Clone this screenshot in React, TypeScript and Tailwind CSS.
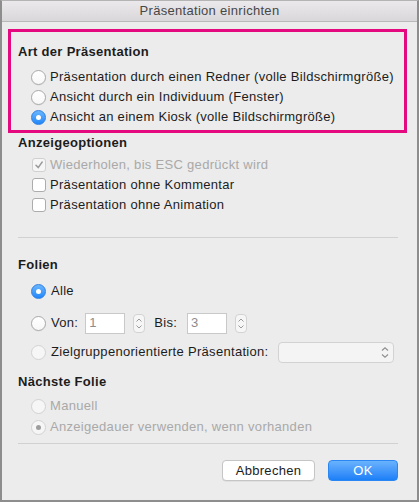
const font = { fontFamily: '"Liberation Sans", Arial, sans-serif' };

const Radio = ({ checked = false, disabled = false }: { checked?: boolean; disabled?: boolean }) => {
  if (checked && !disabled) {
    return (
      <span className="flex h-[15px] w-[15px] shrink-0 items-center justify-center rounded-full border border-[#2d7fe6] bg-gradient-to-b from-[#69b6fd] to-[#1e86f8]">
        <span className="h-[5px] w-[5px] rounded-full bg-white" />
      </span>
    );
  }
  if (disabled) {
    return (
      <span className="flex h-[15px] w-[15px] shrink-0 items-center justify-center rounded-full border border-[#d2d2d2] bg-[#f6f6f6]">
        {checked && <span className="h-[5px] w-[5px] rounded-full bg-[#9d9d9d]" />}
      </span>
    );
  }
  return (
    <span className="h-[15px] w-[15px] shrink-0 rounded-full border border-[#a9a9a9] bg-gradient-to-b from-white to-[#f7f7f7] shadow-[0_0.5px_0.5px_rgba(0,0,0,0.08)]" />
  );
};

const Checkbox = ({ checked = false, disabled = false }: { checked?: boolean; disabled?: boolean }) => (
  <span
    className={`flex h-[14px] w-[14px] shrink-0 items-center justify-center rounded-[3px] border ${
      disabled ? 'border-[#d0d0d0] bg-[#f6f6f6]' : 'border-[#acacac] bg-white'
    }`}
  >
    {checked && (
      <svg width="10" height="10" viewBox="0 0 10 10">
        <path d="M2 5.2 L4.2 7.6 L8.2 2" fill="none" stroke="#9b9b9b" strokeWidth="1.5" strokeLinecap="round" strokeLinejoin="round" />
      </svg>
    )}
  </span>
);

const Stepper = () => (
  <span className="flex h-[19px] w-[12px] items-center justify-center rounded-[4px] border border-[#d3d3d3] bg-[#f6f6f6]">
    <svg width="8" height="13" viewBox="0 0 8 13">
      <path d="M1.5 4.5 L4 2 L6.5 4.5 M1.5 8.5 L4 11 L6.5 8.5" fill="none" stroke="#9a9a9a" strokeWidth="1" />
    </svg>
  </span>
);

const Row = ({ children, className = '' }: { children: React.ReactNode; className?: string }) => (
  <div className={`flex h-5 items-center gap-[4px] ${className}`}>{children}</div>
);

export default function App() {
  return (
    <div style={font} className="w-[419px] h-[502px] overflow-hidden">
      <div className="flex h-[502px] w-[419px] flex-col border-x-2 border-b-2 border-t border-[#8d8d8d] border-t-[#b4b4b4] bg-[#ececec] text-[13px] tracking-[0.3px] text-[#1c1c1c]">
        <div className="flex h-[21px] shrink-0 items-center justify-center border-b border-[#b9b9b9] bg-gradient-to-b from-[#ebe9eb] to-[#d9d7d9] text-[13px] text-[#474747]">
          Präsentation einrichten
        </div>

        <div className="ml-[6px] mt-[7px] w-[399px] border-[3px] border-[#e5097f] pb-[3px] pt-[10px]">
          <div className="flex h-5 items-center pl-[7px] font-bold">Art der Präsentation</div>
          <div className="mt-[5px] pl-[20px]">
            <Row>
              <Radio />
              <span>Präsentation durch einen Redner (volle Bildschirmgröße)</span>
            </Row>
            <Row>
              <Radio />
              <span>Ansicht durch ein Individuum (Fenster)</span>
            </Row>
            <Row>
              <Radio checked />
              <span>Ansicht an einem Kiosk (volle Bildschirmgröße)</span>
            </Row>
          </div>
        </div>

        <div className="flex h-5 items-center pl-[16px] font-bold">Anzeigeoptionen</div>
        <div className="mt-[2px] pl-[30px]">
          <Row>
            <Checkbox checked disabled />
            <span className="text-[#a9a9a9]">Wiederholen, bis ESC gedrückt wird</span>
          </Row>
          <Row>
            <Checkbox />
            <span>Präsentation ohne Kommentar</span>
          </Row>
          <Row>
            <Checkbox />
            <span>Präsentation ohne Animation</span>
          </Row>
        </div>

        <div className="ml-[16px] mt-[22px] h-px w-[380px] bg-[#d1d1d1]" />

        <div className="mt-[17px] flex h-5 items-center pl-[16px] font-bold">Folien</div>
        <div className="pl-[29px]">
          <Row className="mt-[6px]">
            <Radio checked />
            <span className="ml-[1px]">Alle</span>
          </Row>
          <div className="mt-[11px] flex h-[22px] items-center">
            <Radio />
            <span className="ml-[5px]">Von:</span>
            <span className="ml-[7px] flex h-[21px] w-[40px] items-center border border-[#c9c9c9] bg-white pl-[3px] text-[#8c8c8c]">1</span>
            <span className="ml-[8px]">
              <Stepper />
            </span>
            <span className="ml-[9px]">Bis:</span>
            <span className="ml-[10px] flex h-[21px] w-[40px] items-center border border-[#c9c9c9] bg-white pl-[3px] text-[#8c8c8c]">3</span>
            <span className="ml-[8px]">
              <Stepper />
            </span>
          </div>
          <div className="mt-[7px] flex h-[22px] items-center">
            <Radio disabled />
            <span className="ml-[5px]">Zielgruppenorientierte Präsentation:</span>
            <span className="ml-[10px] flex h-[21px] w-[116px] items-center justify-end rounded-[4px] border border-[#d2d2d2] bg-[#f4f4f4] pr-[4px]">
              <svg width="8" height="13" viewBox="0 0 8 13">
                <path d="M1 4.5 L4 1.8 L7 4.5 M1 8.5 L4 11.2 L7 8.5" fill="none" stroke="#8f8f8f" strokeWidth="1.1" />
              </svg>
            </span>
          </div>
        </div>

        <div className="mt-[9px] flex h-5 items-center pl-[16px] font-bold">Nächste Folie</div>
        <div className="pl-[29px] text-[#a9a9a9]">
          <Row className="mt-[4px]">
            <Radio disabled />
            <span>Manuell</span>
          </Row>
          <Row className="mt-[1px]">
            <Radio checked disabled />
            <span>Anzeigedauer verwenden, wenn vorhanden</span>
          </Row>
        </div>

        <div className="ml-[16px] mt-[6px] h-px w-[380px] bg-[#d1d1d1]" />

        <div className="mt-[16px] flex justify-end gap-[13px] pr-[19px]">
          <button className="flex h-[21px] w-[93px] items-center justify-center rounded-[4px] border border-[#c5c5c5] bg-white text-[13px] tracking-[0.3px] text-[#1c1c1c] shadow-[0_0.5px_0.5px_rgba(0,0,0,0.1)]">
            Abbrechen
          </button>
          <button className="flex h-[21px] w-[70px] items-center justify-center rounded-[4px] border border-[#2a86f3] bg-gradient-to-b from-[#69b2fd] to-[#1a7ff7] text-[13px] tracking-[0.3px] text-white">
            OK
          </button>
        </div>
      </div>
    </div>
  );
}
